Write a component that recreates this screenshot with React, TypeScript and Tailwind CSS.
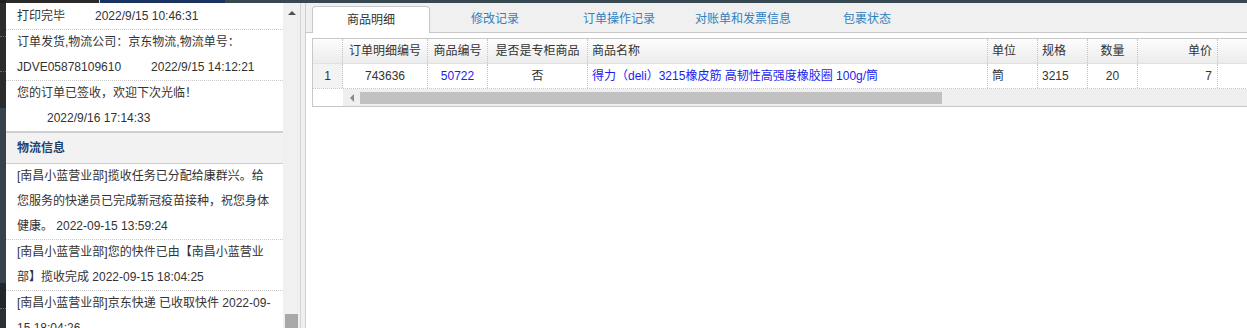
export default function App() {
  const sep = "border-r border-dotted border-[#c4c4c4]";
  const tabs = ["修改记录", "订单操作记录", "对账单和发票信息", "包裹状态"];
  return (
    <div className="w-[1247px] h-[328px] overflow-hidden flex flex-col bg-white text-[12px] text-[#333] font-['Liberation_Sans','Noto_Sans_CJK_SC',sans-serif]">
      <div className="flex h-[3px] shrink-0">
        <div className="w-[6px] bg-[#1e1e1e]" />
        <div className="w-[93px] bg-[#2a2a2a]" />
        <div className="w-px bg-[#d8d8d8]" />
        <div className="w-[125px] bg-[#1b3360]" />
        <div className="flex-1 bg-[#384850]" />
      </div>
      <div className="flex flex-1 min-h-0">
        {/* dark left edge */}
        <div className="w-[6px] shrink-0 flex flex-col">
          <div className="h-[34px] bg-[#2b2b2b] border-b border-dotted border-[#666]" />
          <div className="h-[35px] bg-[#2b2b2b] border-b border-dotted border-[#666]" />
          <div className="h-[36px] bg-[#2b2b2b]" />
          <div className="h-[175px] bg-[#37424b]" />
          <div className="h-[26px] bg-[#23272c] border-b border-dotted border-[#666]" />
          <div className="flex-1 bg-[#2c3035]" />
        </div>

        {/* left panel */}
        <div className="w-[277px] shrink-0 flex flex-col overflow-hidden bg-white whitespace-nowrap">
          <div className="px-[11px] pt-px leading-[25px] border-b border-dotted border-[#c8c8c8]">
            打印完毕<span className="ml-[30px]">2022/9/15 10:46:31</span>
          </div>
          <div className="px-[11px] leading-[25px] border-b border-dotted border-[#c8c8c8]">
            订单发货,物流公司：京东物流,物流单号：
            <br />
            JDVE05878109610<span className="ml-[30px]">2022/9/15 14:12:21</span>
          </div>
          <div className="px-[11px] leading-[25px]">
            您的订单已签收，欢迎下次光临！
            <br />
            <span className="ml-[30px]">2022/9/16 17:14:33</span>
          </div>
          <div className="h-[33px] shrink-0 border-t-2 border-b border-[#cfcfcf] bg-[#f2f2f2] px-[11px] leading-[30px] font-bold text-[#1f3f70]">
            物流信息
          </div>
          <div className="px-[11px] leading-[25px] border-b border-dotted border-[#c8c8c8]">
            [南昌小蓝营业部]揽收任务已分配给康群兴。给
            <br />
            您服务的快递员已完成新冠疫苗接种，祝您身体
            <br />
            健康。 2022-09-15 13:59:24
          </div>
          <div className="px-[11px] leading-[25px] border-b border-dotted border-[#c8c8c8]">
            [南昌小蓝营业部]您的快件已由【南昌小蓝营业
            <br />
            部】揽收完成 2022-09-15 18:04:25
          </div>
          <div className="px-[11px] leading-[25px] border-b border-dotted border-[#c8c8c8]">
            [南昌小蓝营业部]京东快递 已收取快件 2022-09-
            <br />
            15 18:04:26
          </div>
        </div>

        {/* left scrollbar */}
        <div className="w-[17px] shrink-0 bg-[#f0f0f0] flex flex-col items-center justify-between">
          <div className="mt-[8px] w-0 h-0 border-l-[4px] border-r-[4px] border-b-[4px] border-l-transparent border-r-transparent border-b-[#505050]" />
          <div className="w-[13px] h-[14px] bg-[#a8a8a8]" />
        </div>
        <div className="w-px shrink-0 bg-[#d4d4d4]" />
        <div className="w-[4px] shrink-0 bg-[#f0f0f0]" />

        {/* right panel */}
        <div className="flex-1 min-w-0 flex flex-col border-l border-[#cfcfcf] overflow-hidden bg-white">
          <div className="h-[30px] shrink-0 bg-[#f0f0f0] border-b border-[#c8c8c8] flex items-end pl-[6px] gap-[6px]">
            <div className="w-[118px] h-[27px] -mb-px bg-white border border-b-0 border-[#c8c8c8] rounded-t-[4px] flex items-center justify-center text-[#333]">
              商品明细
            </div>
            {tabs.map((t) => (
              <div key={t} className="w-[118px] h-[26px] shrink-0 flex items-center justify-center text-[#2f80c0]">
                {t}
              </div>
            ))}
          </div>

          <div className="pl-[6px] pt-[5px]">
            <div className="w-[980px] border border-r-0 border-[#c8c8c8]">
              <div className="grid grid-cols-[30px_85px_60px_100px_400px_50px_50px_50px_80px_1fr] h-[25px] leading-[24px] border-b border-[#e2e2e2] bg-linear-to-b from-[#fdfdfd] to-[#ececec]">
                <div className={sep} />
                <div className={`${sep} text-center`}>订单明细编号</div>
                <div className={`${sep} text-center`}>商品编号</div>
                <div className={`${sep} text-center`}>是否是专柜商品</div>
                <div className={`${sep} pl-[4px]`}>商品名称</div>
                <div className={`${sep} pl-[4px]`}>单位</div>
                <div className={`${sep} pl-[4px]`}>规格</div>
                <div className={`${sep} text-center`}>数量</div>
                <div className={`${sep} text-right pr-[5px]`}>单价</div>
                <div />
              </div>
              <div className="grid grid-cols-[30px_85px_60px_100px_400px_50px_50px_50px_80px_1fr] h-[25px] leading-[24px] border-b border-dotted border-[#c4c4c4] bg-white">
                <div className={`${sep} text-center bg-[#f3f3f3]`}>1</div>
                <div className={`${sep} text-center`}>743636</div>
                <div className={`${sep} text-center text-[#1c1cf0]`}>50722</div>
                <div className={`${sep} text-center`}>否</div>
                <div className={`${sep} pl-[4px] text-[#1c1cf0] whitespace-nowrap overflow-hidden`}>
                  得力（deli）3215橡皮筋 高韧性高强度橡胶圈 100g/筒
                </div>
                <div className={`${sep} pl-[4px]`}>筒</div>
                <div className={`${sep} pl-[4px]`}>3215</div>
                <div className={`${sep} text-center`}>20</div>
                <div className={`${sep} text-right pr-[5px]`}>7</div>
                <div />
              </div>
              <div className="flex h-[17px]">
                <div className="w-[30px] bg-white" />
                <div className="flex-1 bg-[#efefef] flex items-center">
                  <div className="w-[17px] h-[17px] flex items-center justify-center">
                    <div className="w-0 h-0 border-t-[4px] border-b-[4px] border-r-[4px] border-t-transparent border-b-transparent border-r-[#8a8a8a]" />
                  </div>
                  <div className="w-[582px] h-[12px] bg-[#c1c1c1]" />
                </div>
              </div>
            </div>
          </div>
        </div>
      </div>
    </div>
  );
}
